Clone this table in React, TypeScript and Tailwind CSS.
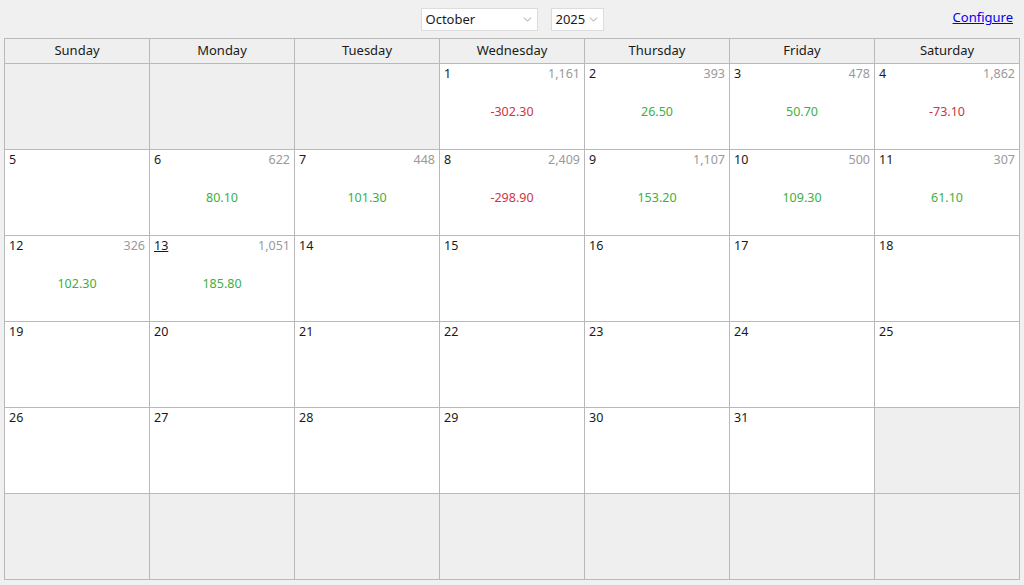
import { ChevronDown } from 'lucide-react';

type Day = { n: number; count?: string; amount?: string };

const days: Record<number, Day> = {
  1: { n: 1, count: '1,161', amount: '-302.30' },
  2: { n: 2, count: '393', amount: '26.50' },
  3: { n: 3, count: '478', amount: '50.70' },
  4: { n: 4, count: '1,862', amount: '-73.10' },
  6: { n: 6, count: '622', amount: '80.10' },
  7: { n: 7, count: '448', amount: '101.30' },
  8: { n: 8, count: '2,409', amount: '-298.90' },
  9: { n: 9, count: '1,107', amount: '153.20' },
  10: { n: 10, count: '500', amount: '109.30' },
  11: { n: 11, count: '307', amount: '61.10' },
  12: { n: 12, count: '326', amount: '102.30' },
  13: { n: 13, count: '1,051', amount: '185.80' },
};

const weekdays = ['Sunday', 'Monday', 'Tuesday', 'Wednesday', 'Thursday', 'Friday', 'Saturday'];

function Select({ value, width }: { value: string; width: string }) {
  return (
    <div
      className={`${width} h-[23px] bg-white border border-[#dcdcdc] flex items-center justify-between pl-[4px] pr-[3px] text-[13px] text-[#1a1a1a]`}
    >
      <span>{value}</span>
      <ChevronDown className="w-[13px] h-[13px] text-[#888]" strokeWidth={1.5} />
    </div>
  );
}

function Cell({ date }: { date: number | null }) {
  if (date === null) {
    return <div className="h-[86px] bg-[#efefef] border-r border-b border-[#b9b9b9]" />;
  }
  const d = days[date];
  const negative = d?.amount?.startsWith('-');
  return (
    <div className="h-[86px] bg-white border-r border-b border-[#b9b9b9] flex flex-col px-[4px] pt-[1px]">
      <div className="flex justify-between text-[12.5px] leading-[18px]">
        <span className={date === 13 ? 'underline text-[#1a1a1a]' : 'text-[#1a1a1a]'}>{date}</span>
        {d?.count && <span className="text-[#9a9a9a]">{d.count}</span>}
      </div>
      {d?.amount && (
        <div
          className={`text-center text-[12.5px] mt-[20px] ${negative ? 'text-[#d0343f]' : 'text-[#3cb043]'}`}
        >
          {d.amount}
        </div>
      )}
    </div>
  );
}

export default function App() {
  const cells: (number | null)[] = [null, null, null];
  for (let i = 1; i <= 31; i++) cells.push(i);
  while (cells.length < 42) cells.push(null);

  return (
    <div
      className="w-[1024px] h-[585px] bg-[#f0f0f0] px-[4px] text-[#1a1a1a]"
      style={{ fontFamily: '"Noto Sans", "Open Sans", sans-serif' }}
    >
      {/* Toolbar */}
      <div className="grid grid-cols-[1fr_auto_1fr] h-[38px] pt-[8px]">
        <div />
        <div className="flex gap-[13px]">
          <Select value="October" width="w-[117px]" />
          <Select value="2025" width="w-[53px]" />
        </div>
        <div className="flex justify-end pr-[7px]">
          <a href="#" className="text-[13px] leading-[18px] text-[#0000ee] underline">
            Configure
          </a>
        </div>
      </div>

      {/* Calendar grid */}
      <div className="w-[1016px] border-l border-t border-[#b9b9b9] grid grid-cols-7">
        {weekdays.map((w) => (
          <div
            key={w}
            className="h-[25px] bg-[#efefef] border-r border-b border-[#b9b9b9] flex items-center justify-center text-[13px]"
          >
            {w}
          </div>
        ))}
        {cells.map((c, i) => (
          <Cell key={i} date={c} />
        ))}
      </div>
    </div>
  );
}
